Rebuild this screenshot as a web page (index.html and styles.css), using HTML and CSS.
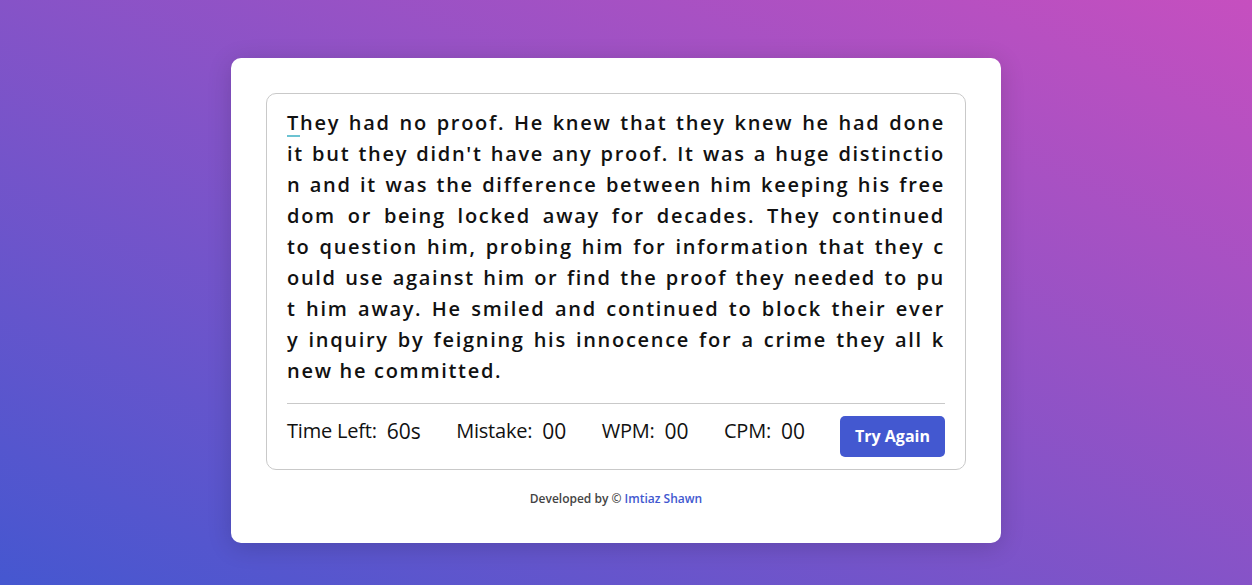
FILE: index.html
```html
<!DOCTYPE html>
<html lang="en">
<head>
<meta charset="utf-8">
<title>Typing Speed Test</title>
<link rel="stylesheet" href="styles.css">
</head>
<body>
<div class="wrapper">
  <div class="content-box">
    <div class="typing-text">
      <p>
        <span class="line"><span class="active">T</span>hey had no proof. He knew that they knew he had done</span>
        <span class="line">it but they didn't have any proof. It was a huge distinctio</span>
        <span class="line">n and it was the difference between him keeping his free</span>
        <span class="line">dom or being locked away for decades. They continued</span>
        <span class="line">to question him, probing him for information that they c</span>
        <span class="line">ould use against him or find the proof they needed to pu</span>
        <span class="line">t him away. He smiled and continued to block their ever</span>
        <span class="line">y inquiry by feigning his innocence for a crime they all k</span>
        <span class="line last">new he committed.</span>
      </p>
    </div>
    <div class="content">
      <ul class="result-details">
        <li class="time"><p>Time Left:</p><span>60s</span></li>
        <li class="mistake"><p>Mistake:</p><span>00</span></li>
        <li class="wpm"><p>WPM:</p><span>00</span></li>
        <li class="cpm"><p>CPM:</p><span>00</span></li>
      </ul>
      <button class="try-btn">Try Again</button>
    </div>
  </div>
  <div class="footer">Developed by &copy; <span class="author">Imtiaz Shawn</span></div>
</div>
</body>
</html>
```
FILE: styles.css
```css
* {
  margin: 0;
  padding: 0;
  box-sizing: border-box;
  font-family: "Open Sans", "DejaVu Sans", sans-serif;
}
html {
  background: linear-gradient(to top right, #4557d0, #c64fbf);
  min-height: 100%;
}
body {
  display: flex;
  align-items: center;
  justify-content: center;
  min-height: 585px;
  padding: 16px 20px 0 0;
}
.wrapper {
  width: 770px;
  padding: 35px;
  background: #fff;
  border-radius: 10px;
  box-shadow: 0 4px 24px rgba(0, 0, 0, 0.16);
}
.content-box {
  padding: 13px 20px 0;
  border-radius: 10px;
  border: 1px solid #c9c9c9;
}
.typing-text p {
  font-size: 20px;
  font-weight: 600;
  line-height: 31px;
  letter-spacing: 1.7px;
  color: #111;
}
.typing-text .line {
  display: block;
  white-space: nowrap;
  text-align: justify;
  text-align-last: justify;
}
.typing-text .line.last {
  text-align-last: left;
}
.typing-text .active {
  text-decoration: underline 2px #6cc3d2;
  text-underline-offset: 5px;
}
.content {
  margin-top: 17px;
  display: flex;
  align-items: center;
  justify-content: space-between;
  padding: 12px 0;
  border-top: 1px solid #c9c9c9;
}
.result-details {
  display: flex;
  justify-content: space-between;
  width: calc(100% - 140px);
  margin-bottom: 12px;
  list-style: none;
}
.result-details li {
  display: flex;
  align-items: center;
  height: 20px;
  color: #111;
}
.result-details li p {
  font-size: 20px;
  font-weight: 500;
  letter-spacing: -0.2px;
}
.result-details li span {
  display: block;
  margin-left: 10px;
  font-size: 21px;
  font-weight: 500;
}
.try-btn {
  width: 105px;
  border: none;
  border-radius: 5px;
  padding: 8px 0;
  font-size: 16px;
  line-height: 25px;
  font-weight: 700;
  color: #fff;
  background: #4358d0;
}
.footer {
  margin-top: 20px;
  text-align: center;
  font-size: 12px;
  line-height: 18px;
  font-weight: 600;
  color: #444;
}
.footer .author {
  color: #4158d0;
}
```
